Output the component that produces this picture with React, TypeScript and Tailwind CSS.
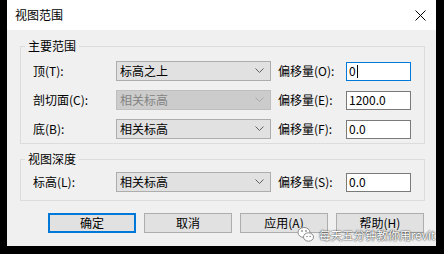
import React from 'react';

const font = "font-['Noto_Sans_CJK_SC','Microsoft_YaHei',sans-serif]";

function Chevron({ disabled }: { disabled?: boolean }) {
  return (
    <svg width="9" height="6" viewBox="0 0 9 6" className="shrink-0">
      <path d="M0.5 0.5 L4.5 4.5 L8.5 0.5" fill="none" stroke={disabled ? '#a8a8a8' : '#606060'} strokeWidth="1" />
    </svg>
  );
}

function Select({ value, disabled }: { value: string; disabled?: boolean }) {
  return (
    <div
      className={
        disabled
          ? 'flex items-center justify-between h-[20px] w-[155px] border border-[#bfbfbf] bg-[#cccccc] pl-[3px] pr-[6px] text-[#838383]'
          : 'flex items-center justify-between h-[20px] w-[155px] border border-[#adadad] bg-[#e1e1e1] pl-[3px] pr-[6px] text-black'
      }
    >
      <span>{value}</span>
      <Chevron disabled={disabled} />
    </div>
  );
}

function Input({ value, focused }: { value: string; focused?: boolean }) {
  return (
    <div
      className={
        focused
          ? 'flex items-center h-[19px] w-[65px] border border-[#0078d7] bg-white pl-[2px]'
          : 'flex items-center h-[19px] w-[65px] border border-[#7a7a7a] bg-white pl-[2px]'
      }
    >
      <span>{value}</span>
      {focused && <span className="ml-[1px] h-[13px] w-px bg-black" />}
    </div>
  );
}

function Row({ label, value, offset, input, disabled, focused }: {
  label: string; value: string; offset: string; input: string; disabled?: boolean; focused?: boolean;
}) {
  return (
    <div className="flex items-center h-[20px]">
      <span className="w-[83px]">{label}</span>
      <Select value={value} disabled={disabled} />
      <span className="ml-[7px] w-[68px]">{offset}</span>
      <Input value={input} focused={focused} />
    </div>
  );
}

function Group({ title, children, className }: { title: string; children: React.ReactNode; className: string }) {
  return (
    <fieldset className={'border border-[#dcdcdc] ' + className}>
      <legend className="ml-[4px] px-[3px] leading-[16px]">{title}</legend>
      <div className="pl-[12px]">{children}</div>
    </fieldset>
  );
}

function WeChatIcon() {
  return (
    <svg width="18" height="17" viewBox="0 0 18 17">
      <ellipse cx="7" cy="6.5" rx="6" ry="5" fill="#fff" stroke="#8c8c8c" strokeWidth="1" />
      <ellipse cx="11.5" cy="11" rx="5" ry="4.2" fill="#fff" stroke="#8c8c8c" strokeWidth="1" />
      <circle cx="5" cy="5" r="0.9" fill="#8c8c8c" />
      <circle cx="9" cy="5" r="0.9" fill="#8c8c8c" />
      <circle cx="10" cy="10.5" r="0.8" fill="#8c8c8c" />
      <circle cx="13.2" cy="10.5" r="0.8" fill="#8c8c8c" />
    </svg>
  );
}

export default function App() {
  const buttons = ['确定', '取消', '应用(A)', '帮助(H)'];
  return (
    <div className={'relative w-[444px] h-[254px] bg-black overflow-hidden text-[12px] text-black ' + font}>
      <div className="ml-[7px] w-[429px] h-[246px] bg-[#f0f0f0] flex flex-col">
        <div className="flex items-center justify-between h-[30px] bg-white pl-[8px] pr-[10px]">
          <span className="leading-[16px]">视图范围</span>
          <svg width="11" height="11" viewBox="0 0 11 11">
            <path d="M0.5 0.5 L10.5 10.5 M10.5 0.5 L0.5 10.5" stroke="#000" strokeWidth="1" />
          </svg>
        </div>
        <div className="flex flex-col pl-[13px] pr-[11px]">
          <Group title="主要范围" className="mt-[8px] pt-[7px] pb-[4px]">
            <div className="flex flex-col gap-[9px]">
              <Row label="顶(T):" value="标高之上" offset="偏移量(O):" input="0" focused />
              <Row label="剖切面(C):" value="相关标高" offset="偏移量(E):" input="1200.0" disabled />
              <Row label="底(B):" value="相关标高" offset="偏移量(F):" input="0.0" />
            </div>
          </Group>
          <Group title="视图深度" className="mt-[7px] pt-[5px] pb-[8px]">
            <Row label="标高(L):" value="相关标高" offset="偏移量(S):" input="0.0" />
          </Group>
          <div className="flex justify-end gap-[8px] mt-[12px] pr-px">
            {buttons.map((b, i) => (
              <button
                key={b}
                className={
                  i === 0
                    ? 'h-[20px] w-[88px] border-2 border-[#0078d7] bg-[#e1e1e1] leading-[16px]'
                    : 'h-[20px] w-[88px] border border-[#adadad] bg-[#e1e1e1] leading-[16px]'
                }
              >
                {b}
              </button>
            ))}
          </div>
        </div>
      </div>
      <div className="absolute left-[297px] top-[226px] flex items-center gap-[4px]">
        <WeChatIcon />
        <span className="text-white text-[11.5px] leading-[14px] [text-shadow:0_0_2px_#333,0_0_1px_#333]">每天五分钟教你用revit</span>
      </div>
    </div>
  );
}
